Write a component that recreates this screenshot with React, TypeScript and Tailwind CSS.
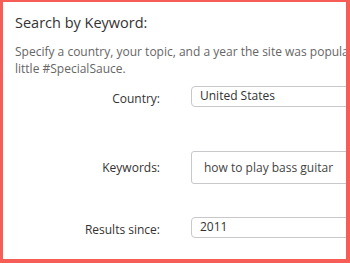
export default function App() {
  return (
    <div
      className="w-[350px] h-[263px] overflow-hidden bg-white border-t-2 border-l-[3px] border-r-4 border-b-4 border-[#f55d56]"
      style={{ fontFamily: '"Open Sans", Arial, sans-serif' }}
    >
      <div className="pl-3 pt-[10px]">
        <h2 className="text-[14.5px] leading-[22px] text-[#333]">Search by Keyword:</h2>
        <p className="mt-[9px] text-[12px] leading-[17px] text-[#666] w-[480px]">
          Specify a country, your topic, and a year the site was popular, and we'll sprinkle in a little #SpecialSauce.
        </p>
      </div>

      <div className="mt-[9px] flex flex-col">
        <div className="flex items-center h-[21px]">
          <label className="w-[157px] shrink-0 text-right text-[12px] text-[#333] pt-[5px]">Country:</label>
          <div className="ml-[31px] w-[200px] h-[21px] shrink-0 border border-[#c8c8cc] rounded-[4px] px-[8px] text-[12px] leading-[18px] text-[#333]">
            United States
          </div>
        </div>

        <div className="flex items-center mt-[44px] h-[33px]">
          <label className="w-[157px] shrink-0 text-right text-[12px] text-[#333]">Keywords:</label>
          <div className="ml-[31px] w-[200px] h-[33px] shrink-0 border border-[#c8c8cc] rounded-[3px] pl-[12px] text-[12px] leading-[31px] text-[#444]">
            how to play bass guitar
          </div>
        </div>

        <div className="flex items-center mt-[33px] h-[21px]">
          <label className="w-[157px] shrink-0 text-right text-[12px] text-[#333] pt-[5px]">Results since:</label>
          <div className="ml-[31px] w-[200px] h-[21px] shrink-0 border border-[#c8c8cc] rounded-[4px] px-[8px] text-[12px] leading-[18px] text-[#333]">
            2011
          </div>
        </div>
      </div>
    </div>
  );
}
